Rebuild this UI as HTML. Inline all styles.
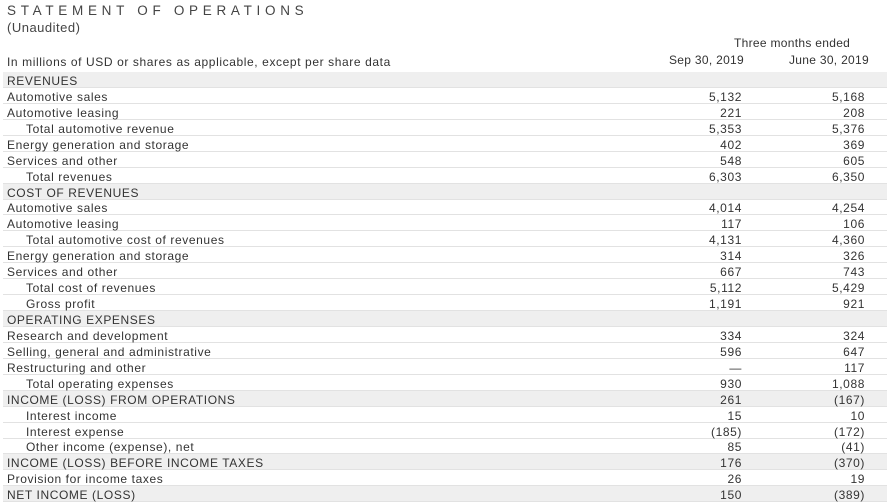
<!DOCTYPE html>
<html><head><meta charset="utf-8"><style>
*{margin:0;padding:0;box-sizing:border-box}
body{width:887px;height:503px;background:#fff;font-family:"Liberation Sans",sans-serif;color:#333;position:relative;overflow:hidden}
.t{position:absolute;left:7px;top:3px;font-size:13.5px;letter-spacing:4.7px;color:#444}
.u{position:absolute;left:7px;top:20px;font-size:13px;letter-spacing:0.5px;color:#444}
.h{position:absolute;font-size:12px;letter-spacing:0.6px;white-space:nowrap}
.h.s{letter-spacing:0.3px}
.r{position:absolute;left:3px;width:884px;height:16px;border-bottom:1px solid #e2e2e2;font-size:12px;letter-spacing:0.6px;white-space:nowrap}
.r.g{background:#efefef}
.r span{position:absolute;top:2px}
.l{left:4px}.l.i{left:23px}
.a{right:145px;text-align:right}
.b{right:22px;text-align:right}
</style></head><body>
<div class="t">STATEMENT OF OPERATIONS</div>
<div class="u">(Unaudited)</div>
<div class="h s" style="left:734px;top:36px">Three months ended</div>
<div class="h" style="left:7px;top:55px">In millions of USD or shares as applicable, except per share data</div>
<div class="h s" style="left:669px;top:53px">Sep 30, 2019</div>
<div class="h s" style="left:789px;top:53px">June 30, 2019</div>
<div id="rows"></div>
<script>
var d=[
["REVENUES","","",1,0],
["Automotive sales","5,132","5,168",0,0],
["Automotive leasing","221","208",0,0],
["Total automotive revenue","5,353","5,376",0,1],
["Energy generation and storage","402","369",0,0],
["Services and other","548","605",0,0],
["Total revenues","6,303","6,350",0,1],
["COST OF REVENUES","","",1,0],
["Automotive sales","4,014","4,254",0,0],
["Automotive leasing","117","106",0,0],
["Total automotive cost of revenues","4,131","4,360",0,1],
["Energy generation and storage","314","326",0,0],
["Services and other","667","743",0,0],
["Total cost of revenues","5,112","5,429",0,1],
["Gross profit","1,191","921",0,1],
["OPERATING EXPENSES","","",1,0],
["Research and development","334","324",0,0],
["Selling, general and administrative","596","647",0,0],
["Restructuring and other","\u2014","117",0,0],
["Total operating expenses","930","1,088",0,1],
["INCOME (LOSS) FROM OPERATIONS","261","(167)",1,0],
["Interest income","15","10",0,1],
["Interest expense","(185)","(172)",0,1],
["Other income (expense), net","85","(41)",0,1],
["INCOME (LOSS) BEFORE INCOME TAXES","176","(370)",1,0],
["Provision for income taxes","26","19",0,0],
["NET INCOME (LOSS)","150","(389)",1,0]];
var h="";
d.forEach(function(r,i){var top=72+i*15.93;
h+='<div class="r'+(r[3]?' g':'')+'" style="top:'+top.toFixed(1)+'px"><span class="l'+(r[4]?' i':'')+'">'+r[0]+'</span><span class="a">'+r[1]+'</span><span class="b">'+r[2]+'</span></div>';});
document.getElementById("rows").innerHTML=h;
</script>
</body></html>
